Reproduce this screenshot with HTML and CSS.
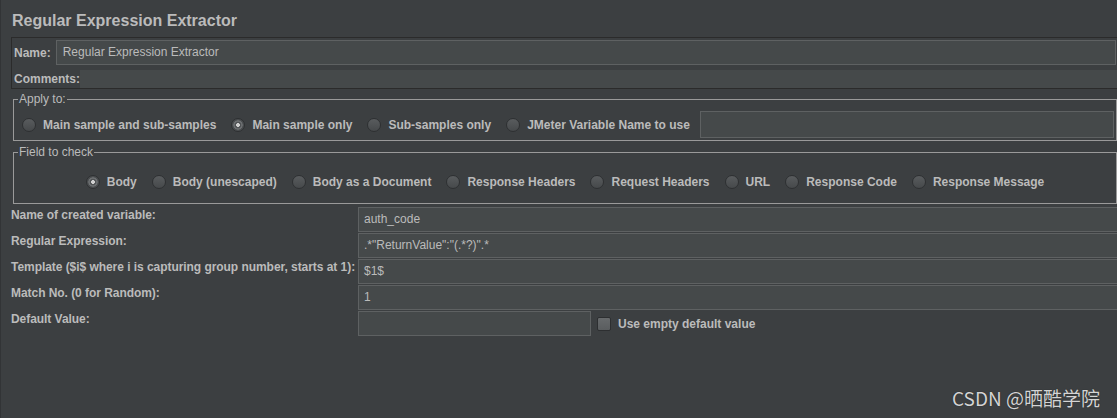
FILE: index.html
```html
<!DOCTYPE html>
<html lang="en">
<head>
<meta charset="utf-8">
<title>Regular Expression Extractor</title>
<link rel="stylesheet" href="styles.css">
</head>
<body>
<div class="page">
  <h1 class="title">Regular Expression Extractor</h1>

  <div class="panel">
    <div class="prow name-row">
      <span class="plabel">Name:</span>
      <div class="tfield name-field">Regular Expression Extractor</div>
    </div>
    <div class="prow comments-row">
      <span class="plabel">Comments:</span>
      <div class="comments-field"></div>
    </div>
  </div>

  <fieldset class="group apply">
    <legend>Apply to:</legend>
    <div class="radios">
      <label class="opt"><span class="radio"></span>Main sample and sub-samples</label>
      <label class="opt"><span class="radio on"></span>Main sample only</label>
      <label class="opt"><span class="radio"></span>Sub-samples only</label>
      <label class="opt"><span class="radio"></span>JMeter Variable Name to use</label>
      <div class="tfield var-field"></div>
    </div>
  </fieldset>

  <fieldset class="group check">
    <legend>Field to check</legend>
    <div class="radios">
      <label class="opt"><span class="radio on"></span>Body</label>
      <label class="opt"><span class="radio"></span>Body (unescaped)</label>
      <label class="opt"><span class="radio"></span>Body as a Document</label>
      <label class="opt"><span class="radio"></span>Response Headers</label>
      <label class="opt"><span class="radio"></span>Request Headers</label>
      <label class="opt"><span class="radio"></span>URL</label>
      <label class="opt"><span class="radio"></span>Response Code</label>
      <label class="opt"><span class="radio"></span>Response Message</label>
    </div>
  </fieldset>

  <div class="form">
    <div class="flabel">Name of created variable:</div>
    <div class="tfield">auth_code</div>
    <div class="flabel">Regular Expression:</div>
    <div class="tfield">.*"ReturnValue":"(.*?)".*</div>
    <div class="flabel">Template ($i$ where i is capturing group number, starts at 1):</div>
    <div class="tfield">$1$</div>
    <div class="flabel">Match No. (0 for Random):</div>
    <div class="tfield">1</div>
    <div class="flabel">Default Value:</div>
    <div class="default-row">
      <div class="tfield short"></div>
      <label class="cb"><span class="box"></span>Use empty default value</label>
    </div>
  </div>

  <div class="watermark">CSDN @晒酷学院</div>
</div>
</body>
</html>
```
FILE: styles.css
```css
html, body {
  margin: 0;
  padding: 0;
}

body {
  width: 1117px;
  height: 418px;
  overflow: hidden;
  background: #3c3f41;
  color: #bbbbbb;
  font-family: "Liberation Sans", Arial, sans-serif;
  font-size: 12px;
}

.page {
  position: relative;
  height: 418px;
  box-shadow: inset 1px 0 0 #323436;
}

.title {
  margin: 0;
  padding: 11px 0 0 12px;
  font-size: 16px;
  line-height: 20px;
  font-weight: bold;
  color: #bbbbbb;
}

/* Name / Comments panel */
.panel {
  margin: 6px 0 0 11px;
  border: 1px solid #2b2b2b;
  border-right: none;
  padding: 2px 0 0 1px;
}

.prow {
  display: flex;
  align-items: center;
}

.plabel {
  font-weight: bold;
  padding-left: 1px;
  line-height: 14px;
  white-space: nowrap;
}

.name-row {
  height: 25px;
}

.tfield {
  box-sizing: border-box;
  height: 25px;
  border: 1px solid #5e6162;
  background: #45494a;
  padding-left: 5px;
  line-height: 23px;
  color: #bbbbbb;
  white-space: nowrap;
  overflow: hidden;
}

.name-field {
  flex: 1;
  margin: 0 1px 0 5px;
  padding-left: 6px;
}

.comments-row {
  margin-top: 5px;
  height: 18px;
}

.comments-field {
  flex: 1;
  align-self: stretch;
  background: #45494a;
}

/* Titled groups */
.group {
  margin: 3px 0 0 13px;
  padding: 0;
  border: 1px solid #9a9a9a;
  min-width: 0;
}

.group legend {
  margin-left: 4px;
  padding: 0 1px;
  line-height: 14px;
  font-size: 12px;
}

.check {
  margin-top: 4px;
}

.radios {
  display: flex;
  align-items: center;
}

.apply .radios {
  padding: 5px 2px 2px 8px;
}

.check .radios {
  justify-content: center;
  height: 20px;
  padding: 13px 0 11px;
}

.opt {
  display: flex;
  align-items: center;
  font-weight: bold;
  white-space: nowrap;
}

.opt + .opt {
  margin-left: 15px;
}

.radio {
  flex: none;
  box-sizing: border-box;
  width: 14px;
  height: 14px;
  margin-right: 7px;
  border-radius: 50%;
  border: 1px solid #2e3032;
  background: linear-gradient(#595c5e, #46494b);
}

.radio.on {
  background: radial-gradient(circle, #d0d0d0 0 1.6px, #505355 2.2px 3.2px, #6c6f71 3.6px 4.4px, #4b4e50 4.9px);
}

.var-field {
  flex: 1;
  height: 27px;
  margin-left: 10px;
}

/* Form grid */
.form {
  display: grid;
  grid-template-columns: 347px 1fr;
  row-gap: 1px;
  margin: 3px -2px 0 11px;
}

.flabel {
  font-weight: bold;
  line-height: 14px;
  padding-top: 1px;
  white-space: nowrap;
  letter-spacing: -0.05px;
}

.default-row {
  display: flex;
  align-items: center;
}

.short {
  width: 233px;
}

.cb {
  display: flex;
  align-items: center;
  margin-left: 6px;
  font-weight: bold;
  white-space: nowrap;
}

.box {
  box-sizing: border-box;
  width: 14px;
  height: 14px;
  margin-right: 7px;
  border-radius: 2px;
  border: 1px solid #2d2f31;
  background: linear-gradient(#676a6c, #5a5d5f);
}

.watermark {
  position: absolute;
  right: 17px;
  bottom: 8px;
  font-family: "Noto Sans CJK SC", "Liberation Sans", sans-serif;
  font-size: 19px;
  line-height: 24px;
  color: #d4d4d4;
  text-shadow: 0 0 1px rgba(0, 0, 0, 0.6);
}
```
